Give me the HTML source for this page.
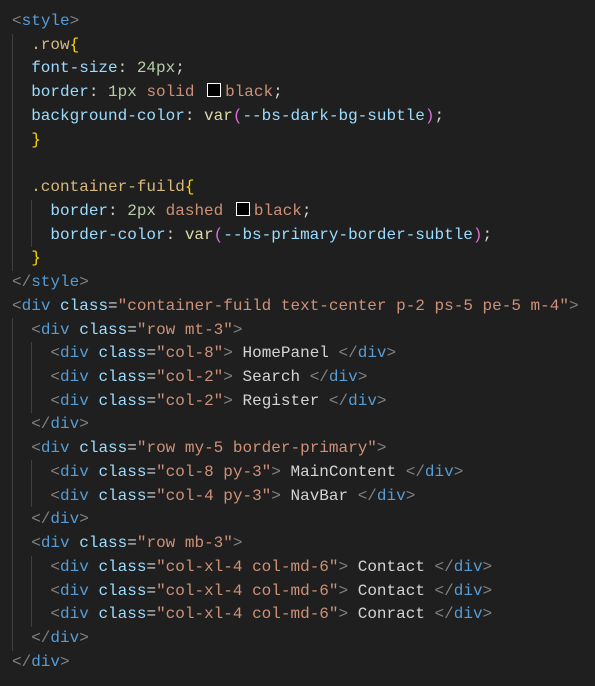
<!DOCTYPE html>
<html><head><meta charset="utf-8"><style>
html,body{margin:0;padding:0;background:#1f1f1f;width:595px;height:686px;overflow:hidden}
pre{margin:0;position:absolute;left:12px;top:10px;font-family:"Liberation Mono",monospace;font-size:16px;line-height:23.74px;color:#d4d4d4;white-space:pre}
.p{color:#808080}.t{color:#569cd6}.a{color:#9cdcfe}.s{color:#ce9178}.n{color:#b5cea8}.y{color:#ffd700}.k{color:#da70d6}.f{color:#dcdcaa}.c{color:#d7ba7d}
.sw{display:inline-block;width:12px;height:12px;border:1px solid #fff;background:#000;margin:0 4px 0 3px;vertical-align:-1px}
.g{position:absolute;width:1px;background:#404040}
</style></head><body>
<div class="g" style="left:12px;top:34px;height:237px"></div>
<div class="g" style="left:31px;top:200px;height:47px"></div>
<div class="g" style="left:12px;top:318px;height:333px"></div>
<div class="g" style="left:31px;top:342px;height:71px"></div>
<div class="g" style="left:31px;top:460px;height:47px"></div>
<div class="g" style="left:31px;top:556px;height:71px"></div>
<pre><span class="p">&lt;</span><span class="t">style</span><span class="p">&gt;</span>
  <span class="c">.row</span><span class="y">{</span>
  <span class="a">font-size</span>: <span class="n">24px</span>;
  <span class="a">border</span>: <span class="n">1px</span> <span class="s">solid</span> <span class="sw"></span><span class="s">black</span>;
  <span class="a">background-color</span>: <span class="f">var</span><span class="k">(</span><span class="a">--bs-dark-bg-subtle</span><span class="k">)</span>;
  <span class="y">}</span>

  <span class="c">.container-fuild</span><span class="y">{</span>
    <span class="a">border</span>: <span class="n">2px</span> <span class="s">dashed</span> <span class="sw"></span><span class="s">black</span>;
    <span class="a">border-color</span>: <span class="f">var</span><span class="k">(</span><span class="a">--bs-primary-border-subtle</span><span class="k">)</span>;
  <span class="y">}</span>
<span class="p">&lt;/</span><span class="t">style</span><span class="p">&gt;</span>
<span class="p">&lt;</span><span class="t">div</span> <span class="a">class</span>=<span class="s">"container-fuild text-center p-2 ps-5 pe-5 m-4"</span><span class="p">&gt;</span>
  <span class="p">&lt;</span><span class="t">div</span> <span class="a">class</span>=<span class="s">"row mt-3"</span><span class="p">&gt;</span>
    <span class="p">&lt;</span><span class="t">div</span> <span class="a">class</span>=<span class="s">"col-8"</span><span class="p">&gt;</span> HomePanel <span class="p">&lt;/</span><span class="t">div</span><span class="p">&gt;</span>
    <span class="p">&lt;</span><span class="t">div</span> <span class="a">class</span>=<span class="s">"col-2"</span><span class="p">&gt;</span> Search <span class="p">&lt;/</span><span class="t">div</span><span class="p">&gt;</span>
    <span class="p">&lt;</span><span class="t">div</span> <span class="a">class</span>=<span class="s">"col-2"</span><span class="p">&gt;</span> Register <span class="p">&lt;/</span><span class="t">div</span><span class="p">&gt;</span>
  <span class="p">&lt;/</span><span class="t">div</span><span class="p">&gt;</span>
  <span class="p">&lt;</span><span class="t">div</span> <span class="a">class</span>=<span class="s">"row my-5 border-primary"</span><span class="p">&gt;</span>
    <span class="p">&lt;</span><span class="t">div</span> <span class="a">class</span>=<span class="s">"col-8 py-3"</span><span class="p">&gt;</span> MainContent <span class="p">&lt;/</span><span class="t">div</span><span class="p">&gt;</span>
    <span class="p">&lt;</span><span class="t">div</span> <span class="a">class</span>=<span class="s">"col-4 py-3"</span><span class="p">&gt;</span> NavBar <span class="p">&lt;/</span><span class="t">div</span><span class="p">&gt;</span>
  <span class="p">&lt;/</span><span class="t">div</span><span class="p">&gt;</span>
  <span class="p">&lt;</span><span class="t">div</span> <span class="a">class</span>=<span class="s">"row mb-3"</span><span class="p">&gt;</span>
    <span class="p">&lt;</span><span class="t">div</span> <span class="a">class</span>=<span class="s">"col-xl-4 col-md-6"</span><span class="p">&gt;</span> Contact <span class="p">&lt;/</span><span class="t">div</span><span class="p">&gt;</span>
    <span class="p">&lt;</span><span class="t">div</span> <span class="a">class</span>=<span class="s">"col-xl-4 col-md-6"</span><span class="p">&gt;</span> Contact <span class="p">&lt;/</span><span class="t">div</span><span class="p">&gt;</span>
    <span class="p">&lt;</span><span class="t">div</span> <span class="a">class</span>=<span class="s">"col-xl-4 col-md-6"</span><span class="p">&gt;</span> Conract <span class="p">&lt;/</span><span class="t">div</span><span class="p">&gt;</span>
  <span class="p">&lt;/</span><span class="t">div</span><span class="p">&gt;</span>
<span class="p">&lt;/</span><span class="t">div</span><span class="p">&gt;</span></pre>
</body></html>
